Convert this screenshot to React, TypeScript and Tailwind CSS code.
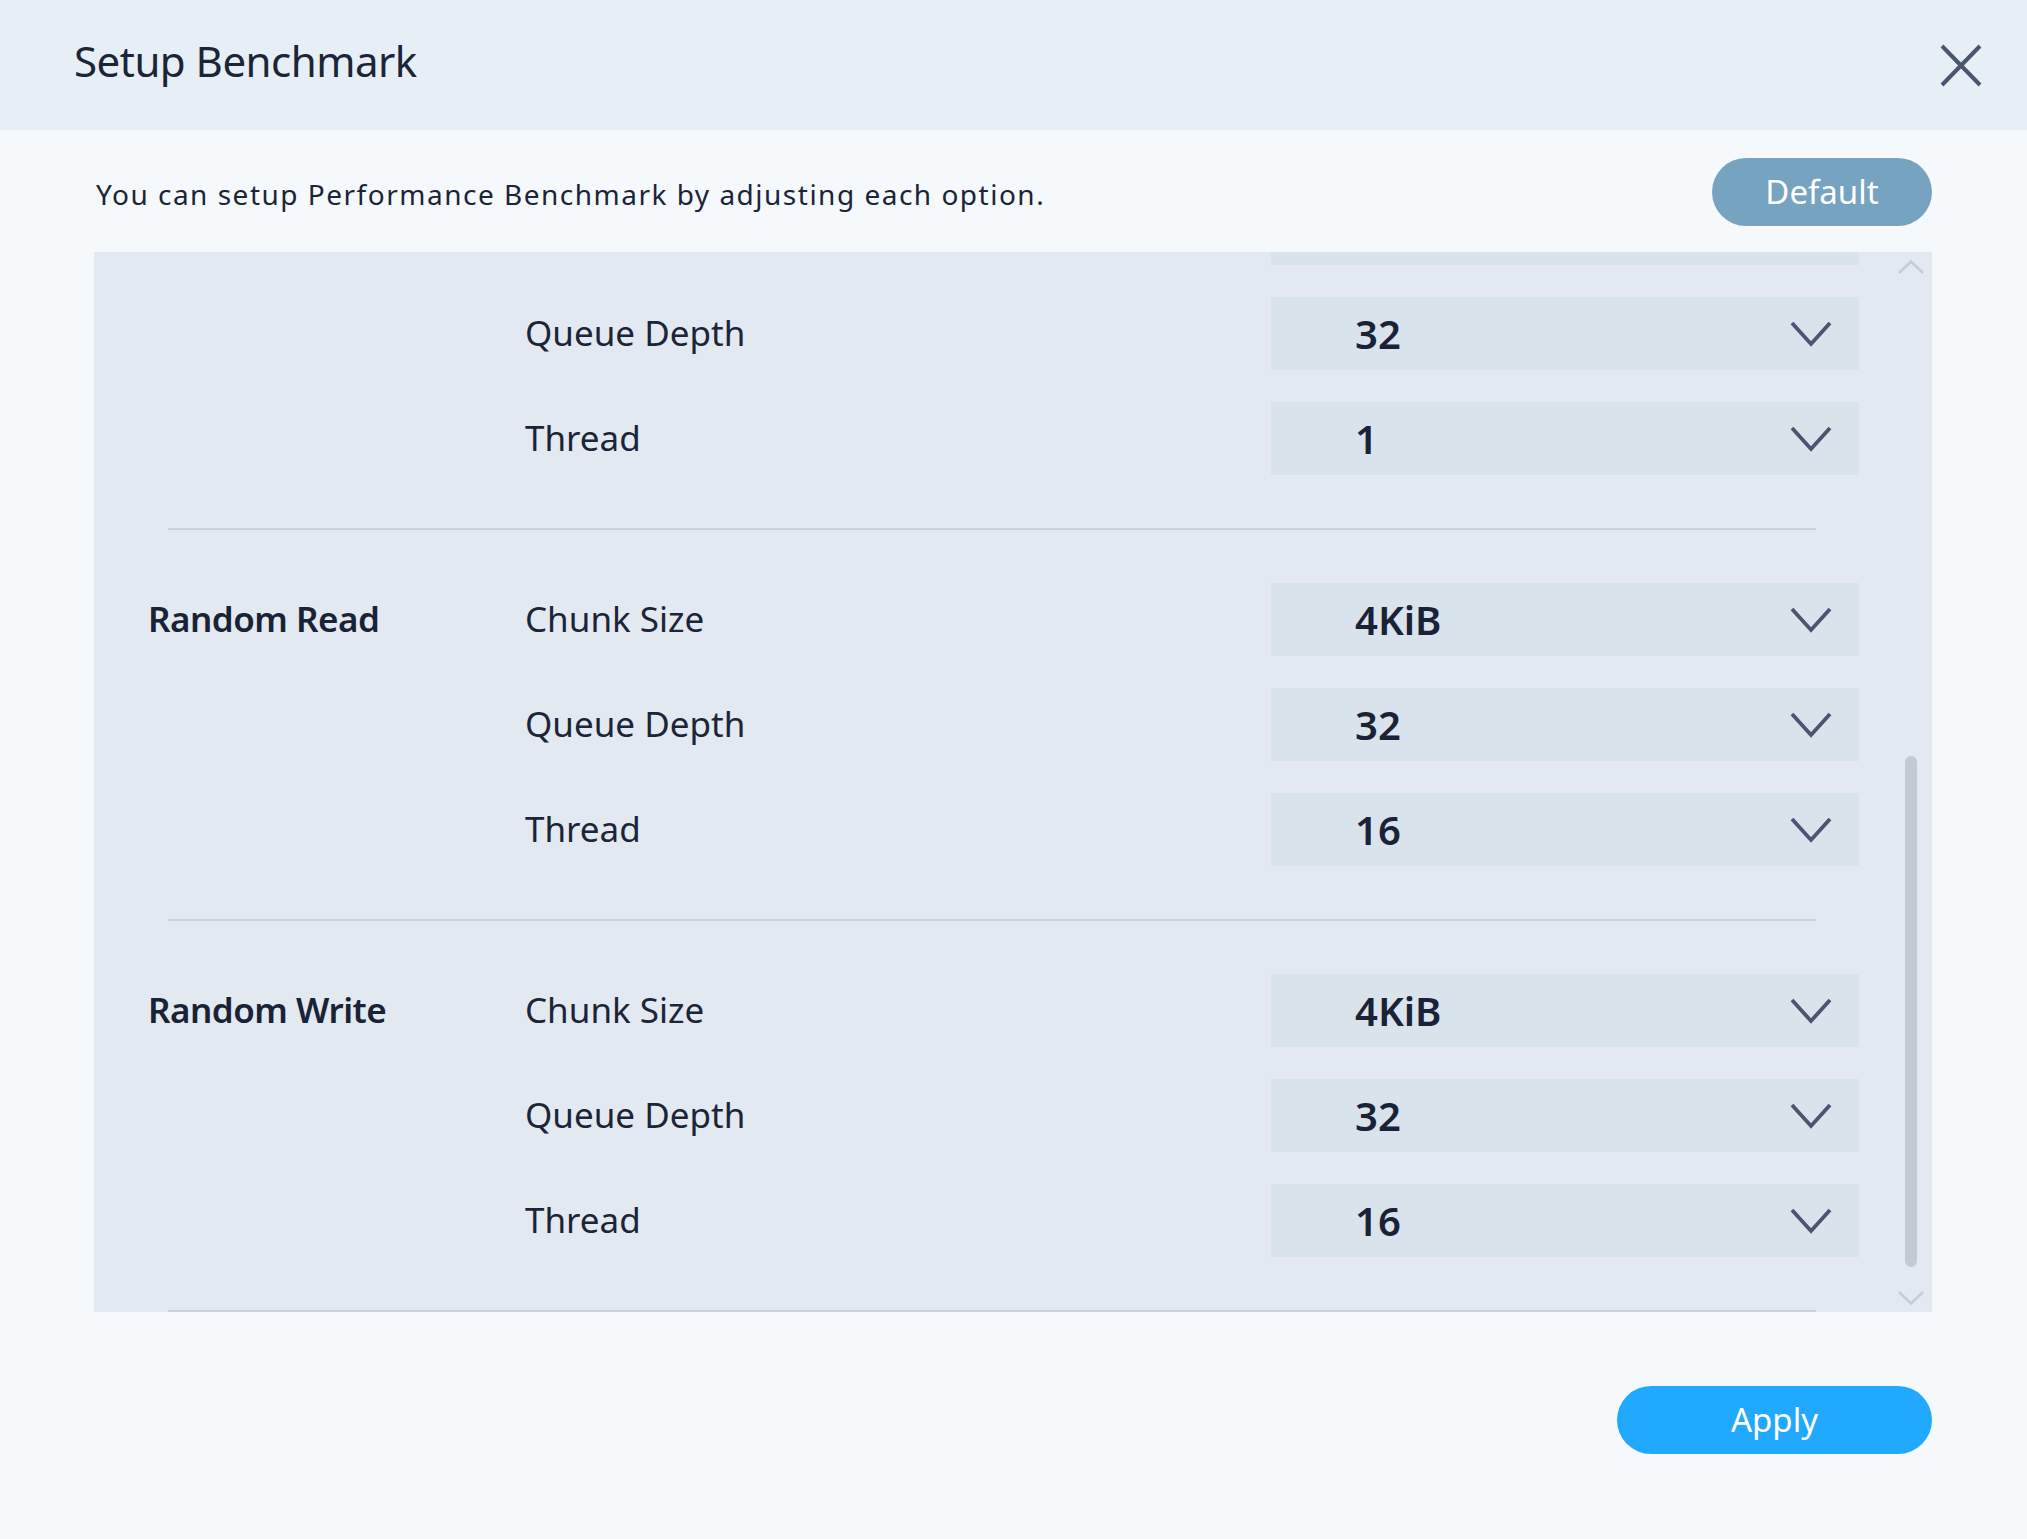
import { useLayoutEffect, useRef } from "react"

type Option = { label: string; value: string }
type Section = { name: string; options: Option[] }

const sections: Section[] = [
    {
        name: "Sequential Write",
        options: [
            { label: "Chunk Size", value: "1MiB" },
            { label: "Queue Depth", value: "32" },
            { label: "Thread", value: "1" }
        ]
    },
    {
        name: "Random Read",
        options: [
            { label: "Chunk Size", value: "4KiB" },
            { label: "Queue Depth", value: "32" },
            { label: "Thread", value: "16" }
        ]
    },
    {
        name: "Random Write",
        options: [
            { label: "Chunk Size", value: "4KiB" },
            { label: "Queue Depth", value: "32" },
            { label: "Thread", value: "16" }
        ]
    }
]

function Chevron() {
    return (
        <svg width="42" height="26" viewBox="0 0 42 26" fill="none">
            <polyline points="2,2 21,23 40,2" stroke="#4a5670" strokeWidth="3.8" />
        </svg>
    )
}

function SectionBlock({ section }: { section: Section }) {
    return (
        <div>
            <div className="flex py-[53px] pl-[54px] pr-[31px]">
                <div className="flex h-[73px] w-[377px] items-center text-[35px] font-semibold tracking-[-0.5px] text-[#1a2236]">
                    {section.name}
                </div>
                <div className="flex flex-1 flex-col gap-[32px]">
                    {section.options.map((option) => (
                        <div key={option.label} className="flex h-[73px] items-center">
                            <span className="flex-1 text-[35px] text-[#1c2438]">{option.label}</span>
                            <div className="flex h-full w-[588px] items-center justify-between bg-[#d9e3ec] pl-[84px] pr-[27px]">
                                <span className="text-[40px] font-semibold text-[#1a2236]">{option.value}</span>
                                <Chevron />
                            </div>
                        </div>
                    ))}
                </div>
            </div>
            <div className="mx-[74px] h-[2px] bg-[#c9d1dc]" />
        </div>
    )
}

export default function App() {
    const listRef = useRef<HTMLDivElement>(null)

    useLayoutEffect(() => {
        if (listRef.current) listRef.current.scrollTop = 113
    }, [])

    return (
        <div className="flex h-[1539px] w-[2027px] flex-col bg-[#f5f9fc] font-['Noto_Sans',sans-serif] text-[#1c2438]">
            <div className="flex h-[130px] shrink-0 items-center justify-between bg-[#e6eef6] pl-[74px] pr-[45px]">
                <h1 className="pb-[9px] text-[42px] font-normal tracking-[-0.5px]">Setup Benchmark</h1>
                <button type="button" aria-label="Close">
                    <svg width="42" height="43" viewBox="0 0 42 43" fill="none">
                        <path d="M2 2 L40 41 M40 2 L2 41" stroke="#4a5670" strokeWidth="4" />
                    </svg>
                </button>
            </div>
            <div className="flex flex-col pl-[94px] pr-[95px]">
                <div className="mt-[28px] flex items-center justify-between">
                    <p className="pl-[2px] pt-[4px] text-[28px] tracking-[1.5px]">
                        You can setup Performance Benchmark by adjusting each option.
                    </p>
                    <button
                        type="button"
                        className="h-[68px] w-[220px] rounded-full bg-[#76a3bf] text-[33px] text-white"
                    >
                        Default
                    </button>
                </div>
                <div className="mt-[26px] flex h-[1060px] bg-[#e2e9f1]">
                    <div ref={listRef} className="flex-1 overflow-hidden">
                        <div className="pb-[40px]">
                            {sections.map((section) => (
                                <SectionBlock key={section.name} section={section} />
                            ))}
                        </div>
                    </div>
                    <div className="flex w-[42px] flex-col items-center pb-[7px] pt-[8px]">
                        <svg width="26" height="14" viewBox="0 0 26 14" fill="none">
                            <polyline points="1,13 13,1.5 25,13" stroke="#c6cdd8" strokeWidth="2.6" />
                        </svg>
                        <div className="flex flex-1 flex-col justify-end pb-[24px]">
                            <div className="h-[511px] w-[12px] rounded-full bg-[#c3cad6]" />
                        </div>
                        <svg width="26" height="14" viewBox="0 0 26 14" fill="none">
                            <polyline points="1,1 13,12.5 25,1" stroke="#c6cdd8" strokeWidth="2.6" />
                        </svg>
                    </div>
                </div>
                <div className="mt-[74px] flex justify-end">
                    <button
                        type="button"
                        className="h-[68px] w-[315px] rounded-full bg-[#21a9ff] text-[33px] text-white"
                    >
                        Apply
                    </button>
                </div>
            </div>
        </div>
    )
}
